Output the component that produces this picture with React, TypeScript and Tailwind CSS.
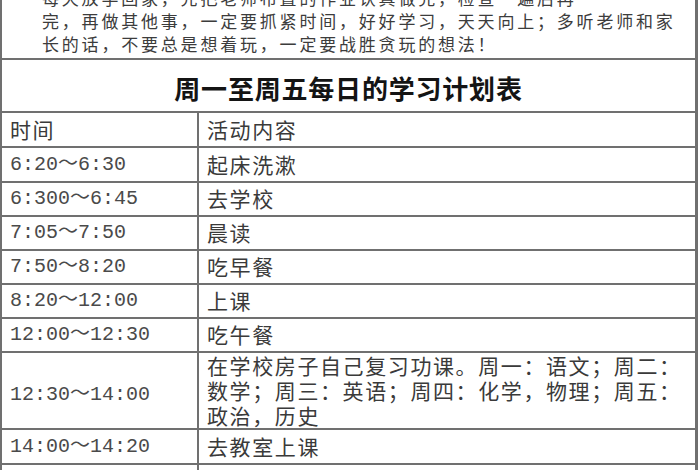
import React from "react";

const cjk = '"Noto Sans CJK SC", "Noto Sans", sans-serif';
const mono = '"Liberation Mono", "Noto Sans CJK SC", monospace';

type Row = { t: string; a: React.ReactNode; h: string; tall?: boolean };

const rows: Row[] = [
  { t: "6:20～6:30", a: "起床洗漱", h: "h-[35px]" },
  { t: "6:300～6:45", a: "去学校", h: "h-[34px]" },
  { t: "7:05～7:50", a: "晨读", h: "h-[34px]" },
  { t: "7:50～8:20", a: "吃早餐", h: "h-[34px]" },
  { t: "8:20～12:00", a: "上课", h: "h-[34px]" },
  { t: "12:00～12:30", a: "吃午餐", h: "h-[34px]" },
  {
    t: "12:30～14:00",
    a: (
      <div className="pb-[8px] leading-[25px]">
        <div className="whitespace-nowrap">在学校房子自己复习功课。周一：语文；周二：</div>
        <div className="whitespace-nowrap">数学；周三：英语；周四：化学，物理；周五：</div>
        <div className="whitespace-nowrap">政治，历史</div>
      </div>
    ),
    h: "h-[77px]",
    tall: true,
  },
  { t: "14:00～14:20", a: "去教室上课", h: "h-[35px]" },
  { t: "14:20～17:00", a: "上课", h: "h-[35px]" },
];

export default function App() {
  return (
    <div className="w-[700px] h-[470px] overflow-hidden bg-white">
      <div className="w-[698px] border-l-2 border-r-[3px] border-[#707070] bg-white">
        {/* top paragraph */}
        <div
          className="h-[58px] overflow-hidden pl-[40px] text-[17px] leading-[23px] tracking-[2.8px] text-[#3c3c3c]"
          style={{ fontFamily: cjk }}
        >
          <div className="-mt-[14px]">
            <div className="whitespace-nowrap">每天放学回家，先把老师布置的作业认真做完，检查一遍后再</div>
            <div className="whitespace-nowrap">完，再做其他事，一定要抓紧时间，好好学习，天天向上；多听老师和家</div>
            <div className="whitespace-nowrap">长的话，不要总是想着玩，一定要战胜贪玩的想法！</div>
          </div>
        </div>
        {/* title */}
        <div
          className="h-[53px] border-t-2 border-[#707070] flex items-center justify-center pt-[4px] text-[26px] font-bold tracking-[0.8px] text-[#141414]"
          style={{ fontFamily: cjk }}
        >
          周一至周五每日的学习计划表
        </div>
        {/* header */}
        <div
          className="grid grid-cols-[195px_1fr] h-[35px] border-t-2 border-[#707070] text-[21px] tracking-[1.6px] text-[#3a3a3a]"
          style={{ fontFamily: cjk }}
        >
          <div className="flex items-center pl-[8px]">时间</div>
          <div className="flex items-center pl-[8px] border-l-2 border-[#707070]">活动内容</div>
        </div>
        {rows.map((r, i) => (
          <div
            key={i}
            className={`grid grid-cols-[195px_1fr] ${r.h} border-t-2 border-[#707070] text-[#3a3a3a]`}
          >
            <div
              className="flex items-center pl-[8px] text-[20px] whitespace-nowrap text-[#4a4a4a]"
              style={{ fontFamily: mono }}
            >
              {r.t}
            </div>
            <div
              className="flex items-center pl-[8px] border-l-2 border-[#707070] text-[21px] tracking-[1.6px]"
              style={{ fontFamily: cjk }}
            >
              {r.a}
            </div>
          </div>
        ))}
      </div>
    </div>
  );
}
